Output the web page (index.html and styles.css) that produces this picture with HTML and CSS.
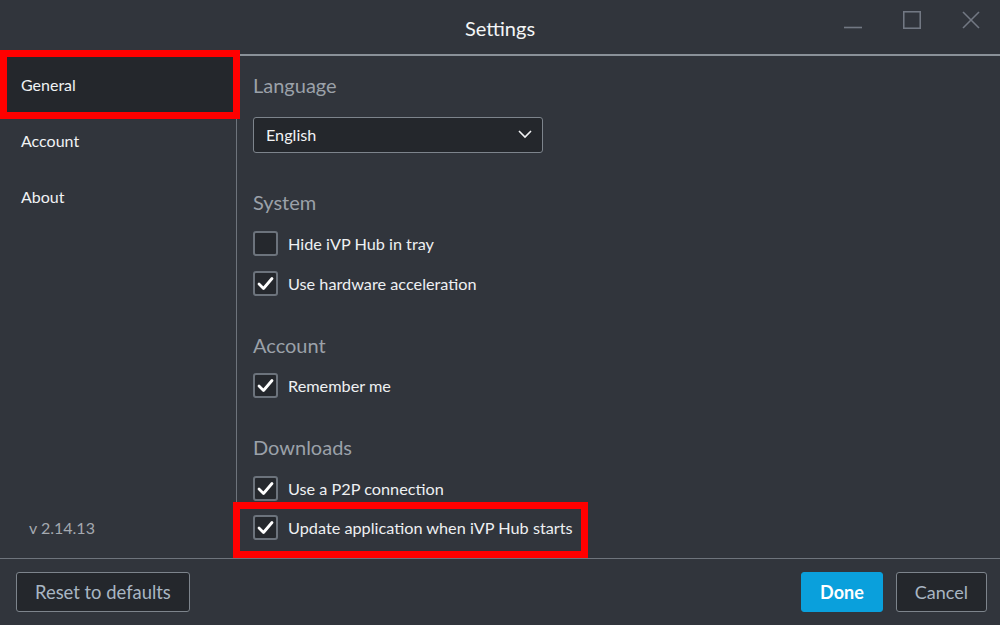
FILE: index.html
```html
<!DOCTYPE html>
<html lang="en">
<head>
<meta charset="utf-8">
<title>Settings</title>
<link rel="stylesheet" href="styles.css">
</head>
<body>
<div class="app">
  <header class="titlebar">
    <div></div>
    <div class="title">Settings</div>
    <div class="controls">
      <svg class="ctl" width="18" height="18" viewBox="0 0 18 18"><line x1="0" y1="16.5" x2="18" y2="16.5"/></svg>
      <svg class="ctl" width="18" height="18" viewBox="0 0 18 18"><rect x="0.75" y="0.75" width="16.5" height="16.5"/></svg>
      <svg class="ctl" width="18" height="18" viewBox="0 0 18 18"><line x1="1" y1="1" x2="17" y2="17"/><line x1="17" y1="1" x2="1" y2="17"/></svg>
    </div>
  </header>
  <div class="main">
    <nav class="sidebar">
      <div class="nav-item active">General</div>
      <div class="nav-item">Account</div>
      <div class="nav-item">About</div>
      <div class="version">v 2.14.13</div>
    </nav>
    <section class="content">
      <h2 class="heading first">Language</h2>
      <div class="select">
        <span>English</span>
        <svg width="14" height="9" viewBox="0 0 14 9"><polyline points="1,1 7,7 13,1"/></svg>
      </div>

      <h2 class="heading system">System</h2>
      <div class="rows">
        <label class="row"><span class="box"></span>Hide iVP Hub in tray</label>
        <label class="row"><span class="box"><svg viewBox="0 0 25 25"><polyline points="6,13 10.5,17.5 19,7.5"/></svg></span>Use hardware acceleration</label>
      </div>

      <h2 class="heading">Account</h2>
      <div class="rows">
        <label class="row"><span class="box"><svg viewBox="0 0 25 25"><polyline points="6,13 10.5,17.5 19,7.5"/></svg></span>Remember me</label>
      </div>

      <h2 class="heading downloads">Downloads</h2>
      <div class="rows tight">
        <label class="row"><span class="box"><svg viewBox="0 0 25 25"><polyline points="6,13 10.5,17.5 19,7.5"/></svg></span>Use a P2P connection</label>
        <label class="row"><span class="box"><svg viewBox="0 0 25 25"><polyline points="6,13 10.5,17.5 19,7.5"/></svg></span>Update application when iVP Hub starts</label>
      </div>
    </section>
  </div>
  <footer class="footer">
    <button class="btn reset">Reset to defaults</button>
    <div class="spacer"></div>
    <button class="btn primary">Done</button>
    <button class="btn">Cancel</button>
  </footer>
  <div class="mark mark-nav"></div>
  <div class="mark mark-update"></div>
</div>
</body>
</html>
```

FILE: styles.css
```css
* { box-sizing: border-box; }
html, body { margin: 0; padding: 0; }
body {
  width: 1000px;
  height: 625px;
  overflow: hidden;
  background: #31353c;
  font-family: Lato, "Open Sans", "Liberation Sans", sans-serif;
  color: #eceef0;
}
.app {
  position: relative;
  width: 1000px;
  height: 625px;
  display: flex;
  flex-direction: column;
}
.titlebar {
  height: 56px;
  flex: none;
  display: grid;
  grid-template-columns: 1fr auto 1fr;
  align-items: start;
  border-bottom: 2px solid #8a9199;
}
.title {
  font-size: 20px;
  line-height: 24px;
  margin-top: 16px;
  color: #f4f5f6;
}
.controls {
  justify-self: end;
  display: flex;
  gap: 41px;
  padding-top: 11px;
  padding-right: 20px;
}
.ctl { fill: none; stroke: #727883; stroke-width: 1.6; display: block; }
.main {
  flex: 1;
  display: flex;
  min-height: 0;
}
.sidebar {
  width: 237px;
  flex: none;
  border-right: 1px solid #6e747c;
  display: flex;
  flex-direction: column;
}
.nav-item {
  height: 56px;
  display: flex;
  align-items: center;
  padding-left: 21px;
  font-size: 16px;
  color: #f0f2f4;
}
.nav-item.active { background: #24272c; }
.version {
  margin-top: auto;
  padding: 0 0 20px 29px;
  font-size: 16px;
  line-height: 20px;
  color: #a4a9b0;
}
.content {
  flex: 1;
  padding-left: 16px;
  display: flex;
  flex-direction: column;
  align-items: flex-start;
}
.heading {
  margin: 37px 0 16px;
  font-size: 20px;
  line-height: 24px;
  font-weight: normal;
  color: #9ba1a9;
}
.heading.first { margin-top: 17px; margin-bottom: 20px; }
.heading.system { margin-bottom: 17px; }
.heading.downloads { margin-bottom: 17px; }
.select {
  width: 290px;
  height: 36px;
  border: 1px solid #7d848c;
  border-radius: 3px;
  background: #24272c;
  display: flex;
  align-items: center;
  justify-content: space-between;
  padding: 0 10px 1px 12px;
  font-size: 16.2px;
  color: #f2f3f5;
}
.select svg { fill: none; stroke: #f2f3f5; stroke-width: 1.6; display: block; }
.rows {
  display: flex;
  flex-direction: column;
  gap: 15px;
}
.rows.tight { gap: 14px; }
.row {
  height: 25px;
  display: flex;
  align-items: center;
  gap: 10px;
  font-size: 16.25px;
  color: #eef0f2;
}
.box {
  width: 25px;
  height: 25px;
  flex: none;
  border: 2px solid #6c737c;
  border-radius: 3px;
  background: #25282d;
  display: flex;
  align-items: center;
  justify-content: center;
}
.box svg {
  width: 25px;
  height: 25px;
  flex: none;
  fill: none;
  stroke: #ffffff;
  stroke-width: 2.8;
  stroke-linecap: round;
  stroke-linejoin: round;
}
.footer {
  height: 67px;
  flex: none;
  border-top: 1px solid #6e747c;
  display: flex;
  align-items: flex-start;
  padding: 13px 13px 0 16px;
  gap: 13px;
}
.spacer { flex: 1; }
.btn {
  height: 40px;
  font-family: inherit;
  font-size: 18px;
  color: #a9b6c3;
  background: #24272c;
  border: 1px solid #7d848c;
  border-radius: 3px;
  padding: 0 18px;
}
.btn.reset { padding: 0 18px; font-size: 18.4px; }
.btn.primary {
  background: #0aa0dc;
  border-color: #0aa0dc;
  color: #ffffff;
  font-weight: bold;
  padding: 0 18px;
}
.mark {
  position: absolute;
  border: 7px solid #ff0000;
  pointer-events: none;
}
.mark-nav { left: 0; top: 50px; width: 240px; height: 69px; }
.mark-update { left: 233px; top: 502px; width: 355px; height: 56px; }
```
